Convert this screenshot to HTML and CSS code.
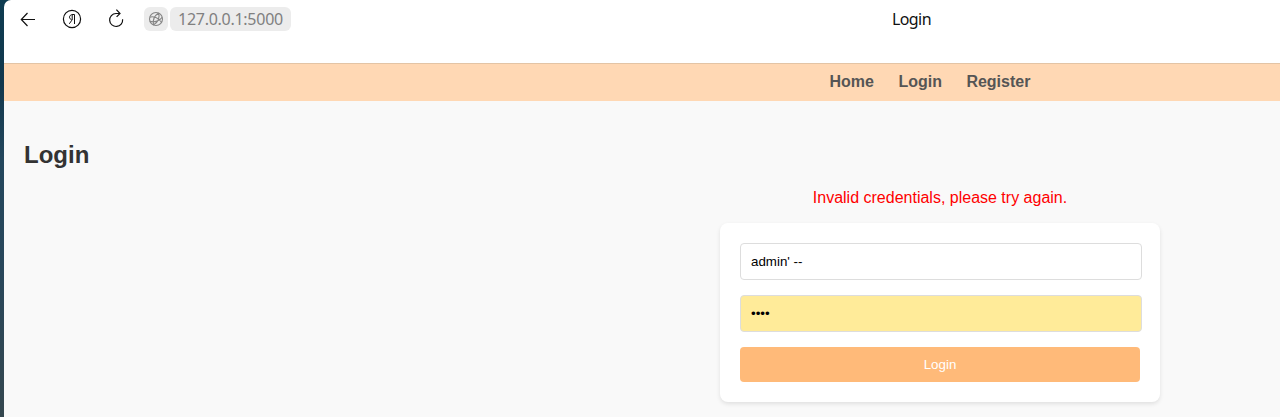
FILE: index.html
```html
<!DOCTYPE html>
<html lang="en">
<head>
<meta charset="utf-8">
<title>Login</title>
<link rel="stylesheet" href="styles.css">
</head>
<body>
<div class="window">
  <header class="toolbar">
    <div class="controls">
      <svg class="icon" viewBox="0 0 20 20"><path d="M17 10.500H3.500M9.500 4L3.300 10.500L9.500 17"/></svg>
      <svg class="icon" viewBox="0 0 20 20"><circle cx="10" cy="10" r="8.600"/><path class="thin" d="M12.500 15V5.500H11C8.800 5.500 7.500 6.700 7.500 8.200C7.500 9.400 8.500 10.200 9.900 11.200L7.300 14.800M10.200 5.600V11"/></svg>
      <svg class="icon" viewBox="0 0 20 20"><path d="M13.500 4.500H10A6.500 6.500 0 1 0 16.600 10.200M10.400 .7L14 4.500L10.600 7.900"/></svg>
    </div>
    <div class="address">
      <span class="site"><svg class="globe" viewBox="0 0 16 16"><circle cx="8" cy="8" r="6.500"/><path d="M10.600 2C6.800 4.500 4.500 9 5.400 14M10.600 2C12.200 6.300 10 11.700 5.400 14M1.700 6.200C5.500 5 10.500 6.800 13.500 11.300M1.900 10.300C6.500 11.800 12 9.700 14.200 6.300"/></svg></span>
      <span class="url">127.0.0.1:5000</span>
    </div>
    <div class="tab-title">Login</div>
  </header>
  <div class="page">
    <nav class="nav"><a>Home</a><a>Login</a><a>Register</a></nav>
    <main class="content">
      <h2 class="heading">Login</h2>
      <div class="column">
        <p class="error">Invalid credentials, please try again.</p>
        <form class="card">
          <input class="field" type="text" value="admin' --">
          <input class="field filled" type="password" value="1234">
          <button class="submit" type="button">Login</button>
        </form>
      </div>
    </main>
  </div>
</div>
</body>
</html>
```
FILE: styles.css
```css
body {
  margin: 0;
  height: 417px;
  overflow: hidden;
  background: linear-gradient(#0e3c51, #12384d 20%, #24475d 38%, #29475b 65%, #35474f);
  font-family: "Liberation Sans", Arial, sans-serif;
}
.window {
  height: 417px;
  margin-left: 4px;
  overflow: hidden;
  border-top-left-radius: 7px;
  background: #fff;
}
.toolbar {
  display: flex;
  height: 38px;
  padding-bottom: 25px;
  align-items: center;
  font-family: "Noto Sans", sans-serif;
  font-size: 16px;
}
.controls {
  display: flex;
  gap: 24px;
  margin-left: 14px;
}
.icon {
  width: 20px;
  height: 20px;
  fill: none;
  stroke: #111;
  stroke-width: 1.2;
}
.thin {
  stroke-width: 1;
}
.address {
  display: flex;
  gap: 2px;
  margin-left: 18px;
  color: #808080;
}
.site,
.url {
  display: flex;
  align-items: center;
  box-sizing: border-box;
  height: 24px;
  border-radius: 6px;
  background: #ececec;
}
.site {
  justify-content: center;
  width: 24px;
}
.globe {
  width: 16px;
  height: 16px;
  fill: none;
  stroke: #858585;
  stroke-width: 1.1;
}
.url {
  width: 121px;
  padding-left: 8px;
  letter-spacing: -0.270px;
  white-space: nowrap;
}
.tab-title {
  margin-left: 601px;
  color: #111;
  letter-spacing: -0.600px;
}
.page {
  height: 354px;
  background: #f9f9f9;
}
.nav {
  display: flex;
  box-sizing: border-box;
  height: 38px;
  padding: 9px 0 0 825.500px;
  gap: 24.450px;
  border-top: 1px solid #e3c4a5;
  background: #ffd8b4;
  color: #555;
  font-size: 16px;
  font-weight: bold;
  line-height: 18px;
}
.content {
  padding: 40px 20px 0;
}
.heading {
  margin: 0 0 20px;
  color: #333;
  font-size: 24px;
  line-height: 28px;
}
.column {
  width: 440px;
  margin-left: 696px;
}
.error {
  margin: 0 0 16px;
  color: #f00;
  font-size: 16px;
  line-height: 18px;
  text-align: center;
}
.card {
  box-sizing: border-box;
  height: 179px;
  padding: 20px;
  border-radius: 8px;
  background: #fff;
  box-shadow: 0 2px 4px rgba(0, 0, 0, 0.1);
}
.field {
  display: block;
  box-sizing: border-box;
  width: 402px;
  height: 37px;
  margin: 0 0 15px;
  padding: 10px;
  border: 1px solid #ddd;
  border-radius: 4px;
  background: #fff;
  color: #000;
  font: 13.333px "Liberation Sans", Arial, sans-serif;
}
.filled {
  background: #ffeb99;
}
.submit {
  display: block;
  width: 400px;
  height: 35px;
  padding: 0;
  border: 0;
  border-radius: 4px;
  background: #ffba79;
  color: #fff;
  font: 13.333px "Liberation Sans", Arial, sans-serif;
}
```
